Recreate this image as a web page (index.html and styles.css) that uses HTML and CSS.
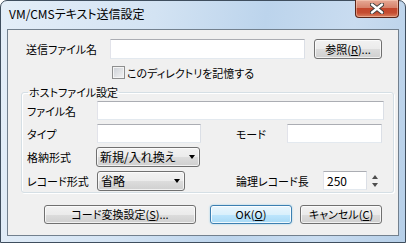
FILE: index.html
```html
<!DOCTYPE html>
<html lang="ja">
<head>
  <meta charset="UTF-8" />
  <title>VM/CMSテキスト送信設定</title>
  <link rel="stylesheet" href="styles.css">
</head>
<body>
  <div class="window">
    <div class="titlebar">
      <span class="title">VM/CMSテキスト送信設定</span>
      <div class="close">
        <svg width="14" height="11" viewBox="0 0 14 11">
          <path d="M2 1.5 L12 9.5 M12 1.5 L2 9.5" stroke="#3a3a3a" stroke-width="4.2" stroke-linecap="round" fill="none"/>
          <path d="M2 1.5 L12 9.5 M12 1.5 L2 9.5" stroke="#fff" stroke-width="2.4" stroke-linecap="round" fill="none"/>
        </svg>
      </div>
    </div>

    <div class="client">
      <div class="row send-row">
        <span class="lbl send-lbl">送信ファイル名</span>
        <div class="edit send-edit"></div>
        <div class="btn browse-btn">参照(<u>R</u>)...</div>
      </div>

      <div class="row check-row">
        <span class="check"></span>
        <span class="check-text">このディレクトリを記憶する</span>
      </div>

      <fieldset class="group">
        <legend>ホストファイル設定</legend>

        <div class="row grow first">
          <span class="lbl">ファイル名</span>
          <div class="edit name-edit"></div>
        </div>

        <div class="row grow">
          <div class="left-part">
            <span class="lbl">タイプ</span>
            <div class="edit type-edit"></div>
          </div>
          <span class="lbl mode-lbl">モード</span>
          <div class="edit mode-edit"></div>
        </div>

        <div class="row grow">
          <span class="lbl">格納形式</span>
          <div class="combo store-combo">
            <span>新規/入れ換え</span>
            <span class="arrow"></span>
          </div>
        </div>

        <div class="row grow last">
          <div class="left-part">
            <span class="lbl">レコード形式</span>
            <div class="combo rec-combo">
              <span>省略</span>
              <span class="arrow"></span>
            </div>
          </div>
          <span class="lbl len-lbl">論理レコード長</span>
          <div class="edit len-edit">250</div>
          <div class="spin">
            <span class="spin-up"></span>
            <span class="spin-down"></span>
          </div>
        </div>
      </fieldset>

      <div class="row buttons">
        <div class="btn code-btn">コード変換設定(<u>S</u>)...</div>
        <div class="btn ok-btn">OK(<u>O</u>)</div>
        <div class="btn cancel-btn">キャンセル(<u>C</u>)</div>
      </div>
    </div>
  </div>
</body>
</html>
```

FILE: styles.css
```css
* {
  box-sizing: border-box;
  margin: 0;
  padding: 0;
}

body {
  background: #fff;
  color: #000;
  font-family: "Noto Sans CJK JP", sans-serif;
  font-size: 11px;
  line-height: 14px;
  font-feature-settings: "palt";
}

/* window frame */
.window {
  width: 406px;
  height: 243px;
  border: 1px solid #3f4e5e;
  border-radius: 7px 7px 0 0;
  background: linear-gradient(100deg, #e4eef8 0%, #d3e3f3 35%, #bcd4ec 60%, #c9dcf0 80%, #b6cfe8 100%);
  padding: 0 6px 6px;
  display: flex;
  flex-direction: column;
}

.titlebar {
  height: 28px;
  display: flex;
  justify-content: space-between;
  align-items: flex-start;
}

.title {
  padding: 6px 0 0 2px;
  font-size: 12px;
  color: #000;
}

.close {
  width: 44px;
  height: 18px;
  margin-top: -1px;
  border: 1px solid #5a2518;
  border-top: none;
  border-radius: 0 0 4px 4px;
  background: linear-gradient(to bottom, #e6a996 0%, #d7826b 45%, #c3462c 50%, #c54d31 75%, #d98060 100%);
  box-shadow: inset 0 0 0 1px rgba(255, 220, 200, 0.45);
  display: flex;
  justify-content: center;
  align-items: center;
}

.client {
  flex: 1;
  border: 1px solid #72808e;
  background: #f0f0f0;
}

/* rows */
.row {
  display: flex;
  align-items: center;
}

.lbl {
  flex: none;
  width: 70px;
  white-space: nowrap;
}

.send-row {
  margin-top: 9px;
  padding-left: 18px;
  height: 20px;
}

.send-lbl {
  width: 84px;
}

.edit {
  flex: none;
  height: 19px;
  background: #fff;
  border: 1px solid;
  border-color: #abadb3 #dbdfe6 #e3e9ef #e2e3ea;
  padding-left: 3px;
  line-height: 17px;
}

.send-edit {
  width: 195px;
  height: 20px;
}

.btn {
  flex: none;
  height: 19px;
  border: 1px solid #707070;
  border-radius: 3px;
  background: linear-gradient(to bottom, #f2f2f2 0%, #ebebeb 50%, #dddddd 50%, #cfcfcf 100%);
  box-shadow: inset 0 0 0 1px rgba(255, 255, 255, 0.7);
  text-align: center;
  line-height: 17px;
  white-space: nowrap;
}

.browse-btn {
  width: 68px;
  height: 20px;
  margin-left: 9px;
  line-height: 18px;
}

.check-row {
  margin-top: 7px;
  padding-left: 104px;
  height: 13px;
}

.check {
  width: 13px;
  height: 13px;
  border: 1px solid #8e8f8f;
  background: linear-gradient(135deg, #cbcfd5 0%, #f4f4f4 100%);
  box-shadow: inset 0 0 0 1px #f4f4f4;
}

.check-text {
  margin-left: 2px;
}

/* group box */
.group {
  margin: 6px 0 0 13px;
  width: 373px;
  min-width: 0;
  border: 1px solid #d5dfe5;
  border-radius: 3px;
  box-shadow: inset 1px 1px 0 #fff, 1px 1px 0 #fff;
  padding: 0 0 2px 5px;
}

.group legend {
  margin-left: 1px;
  padding: 0 1px;
  line-height: 14px;
}

.grow {
  height: 19px;
  margin-top: 4px;
}

.grow.first {
  margin-top: 2px;
}

.grow.last {
  margin-top: 5px;
}

.left-part {
  width: 209px;
  display: flex;
  align-items: center;
}

.name-edit {
  width: 287px;
}

.type-edit {
  width: 104px;
}

.mode-lbl {
  width: 51px;
}

.mode-edit {
  width: 95px;
}

.combo {
  flex: none;
  height: 20px;
  margin-left: -1px;
  border: 1px solid #707070;
  border-radius: 3px;
  background: linear-gradient(to bottom, #f2f2f2 0%, #ebebeb 50%, #dddddd 50%, #cfcfcf 100%);
  box-shadow: inset 0 0 0 1px rgba(255, 255, 255, 0.7);
  display: flex;
  align-items: center;
  justify-content: space-between;
  padding: 0 4px 0 3px;
  font-size: 12px;
}

.store-combo {
  width: 104px;
}

.rec-combo {
  width: 88px;
  margin-left: 0;
}

.arrow {
  width: 0;
  height: 0;
  border-left: 3.5px solid transparent;
  border-right: 3.5px solid transparent;
  border-top: 4px solid #000;
}

.len-lbl {
  width: 87px;
}

.len-edit {
  width: 44px;
  padding-left: 3px;
  font-size: 12px;
}

.spin {
  margin-left: 3px;
  width: 9px;
  height: 19px;
  display: flex;
  flex-direction: column;
  justify-content: space-between;
  align-items: center;
  padding: 4px 0 3px;
}

.spin-up {
  width: 0;
  height: 0;
  border-left: 3.5px solid transparent;
  border-right: 3.5px solid transparent;
  border-bottom: 4px solid #4d4d4d;
}

.spin-down {
  width: 0;
  height: 0;
  border-left: 3.5px solid transparent;
  border-right: 3.5px solid transparent;
  border-top: 4px solid #4d4d4d;
}

/* dialog buttons */
.buttons {
  margin-top: 12px;
  padding-left: 36px;
}

.code-btn {
  width: 152px;
}

.ok-btn {
  width: 82px;
  margin-left: 14px;
  border-color: #3c7fb1;
  background: linear-gradient(to bottom, #eaf6fd 0%, #d9f0fc 50%, #bee6fd 50%, #a7d9f5 100%);
  box-shadow: inset 0 0 0 1px rgba(255, 255, 255, 0.8), 0 0 2px #8ecae8;
}

.cancel-btn {
  width: 82px;
  margin-left: 8px;
}
```
